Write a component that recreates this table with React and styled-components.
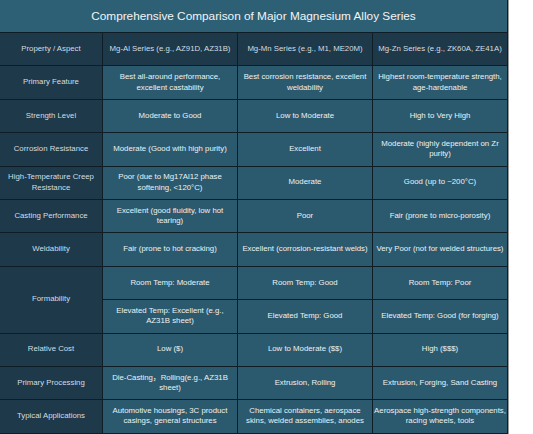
import React from "react";
import styled, { createGlobalStyle } from "styled-components";

const GlobalStyle = createGlobalStyle`
  html, body {
    margin: 0;
    padding: 0;
    background: #ffffff;
  }
  body {
    font-family: "Liberation Sans", Arial, "Noto Sans CJK SC", sans-serif;
  }
`;

const Wrap = styled.div`
  width: 507px;
  border-right: 1px solid #0f1d26;
  box-shadow: 1px 0 0 #9a9a9a;
  background: #0f1d26;
`;

const Title = styled.div`
  height: 33px;
  box-sizing: border-box;
  border-bottom: 1px solid #0f1d26;
  background: #2d6074;
  color: #f2f4f5;
  font-size: 11.8px;
  display: flex;
  align-items: center;
  justify-content: center;
`;

const Grid = styled.div`
  display: grid;
  grid-template-columns: 102px 134px 134px 134px;
  grid-auto-rows: 32.4px;
  gap: 1px;
  background: #0f1d26;
  border-bottom: 1px solid #0f1d26;
`;

const Cell = styled.div`
  display: flex;
  align-items: center;
  justify-content: center;
  text-align: center;
  padding: ${(p) => (p.$tight ? "0" : "0 2px")};
  font-size: 7.8px;
  line-height: 10.6px;
  color: ${(p) => (p.$head ? "#d5dde1" : "#eef1f2")};
  background: ${(p) => (p.$head ? "#1d394a" : "#2b5a6e")};
  grid-row: ${(p) => (p.$span ? `span ${p.$span}` : "auto")};
`;

const header = [
  "Property / Aspect",
  "Mg-Al Series (e.g., AZ91D, AZ31B)",
  "Mg-Mn Series (e.g., M1, ME20M)",
  "Mg-Zn Series (e.g., ZK60A, ZE41A)",
];

const rows = [
  ["Primary Feature", "Best all-around performance, excellent castability", "Best corrosion resistance, excellent weldability", "Highest room-temperature strength, age-hardenable"],
  ["Strength Level", "Moderate to Good", "Low to Moderate", "High to Very High"],
  ["Corrosion Resistance", "Moderate (Good with high purity)", "Excellent", "Moderate (highly dependent on Zr purity)"],
  ["High-Temperature Creep Resistance", "Poor (due to Mg17Al12 phase softening, <120°C)", "Moderate", "Good (up to ~200°C)"],
  ["Casting Performance", "Excellent (good fluidity, low hot tearing)", "Poor", "Fair (prone to micro-porosity)"],
  ["Weldability", "Fair (prone to hot cracking)", "Excellent (corrosion-resistant welds)", "Very Poor (not for welded structures)"],
];

const formability = [
  ["Room Temp: Moderate", "Room Temp: Good", "Room Temp: Poor"],
  ["Elevated Temp: Excellent (e.g., AZ31B sheet)", "Elevated Temp: Good", "Elevated Temp: Good (for forging)"],
];

const tail = [
  ["Relative Cost", "Low ($)", "Low to Moderate ($$)", "High ($$$)"],
  ["Primary Processing", "Die-Casting，Rolling(e.g., AZ31B sheet)", "Extrusion, Rolling", "Extrusion, Forging, Sand Casting"],
  ["Typical Applications", "Automotive housings, 3C product casings, general structures", "Chemical containers, aerospace skins, welded assemblies, anodes", "Aerospace high-strength components, racing wheels, tools"],
];

const Row = ({ cells }) =>
  cells.map((c, i) => (
    <Cell key={i} $head={i === 0} $tight={c.startsWith("Aerospace")}>
      {c}
    </Cell>
  ));

export default function App() {
  return (
    <>
      <GlobalStyle />
      <Wrap>
        <Title>Comprehensive Comparison of Major Magnesium Alloy Series</Title>
        <Grid>
          {header.map((h) => (
            <Cell key={h} $head>
              {h}
            </Cell>
          ))}
          {rows.map((r) => (
            <Row key={r[0]} cells={r} />
          ))}
          <Cell $head $span={2}>
            Formability
          </Cell>
          {formability[0].map((c) => (
            <Cell key={c}>{c}</Cell>
          ))}
          {formability[1].map((c) => (
            <Cell key={c}>{c}</Cell>
          ))}
          {tail.map((r) => (
            <Row key={r[0]} cells={r} />
          ))}
        </Grid>
      </Wrap>
    </>
  );
}
